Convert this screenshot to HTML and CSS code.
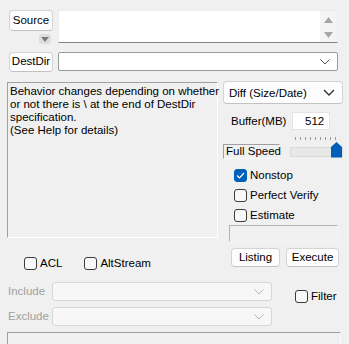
FILE: index.html
```html
<!DOCTYPE html>
<html lang="en">
<head>
    <meta charset="UTF-8">
    <title>Copy Options</title>
    <link rel="stylesheet" href="styles.css">
</head>
<body>
    <div class="win">
        <div class="src-row">
            <div class="src-side">
                <button class="btn btn-side">Source</button>
                <span class="drop-btn">
                    <svg width="8" height="5" viewBox="0 0 8 5"><path d="M0 0h8L4 5z" fill="#7a7a7a"/></svg>
                </span>
            </div>
            <div class="memo">
                <div class="memo-scroll">
                    <svg width="9" height="6" viewBox="0 0 9 6"><path d="M4.5 0L9 6H0z" fill="#a6a6a6"/></svg>
                    <svg width="9" height="6" viewBox="0 0 9 6"><path d="M0 0h9L4.5 6z" fill="#a6a6a6"/></svg>
                </div>
            </div>
        </div>

        <div class="dst-row">
            <button class="btn btn-side">DestDir</button>
            <div class="combo combo-dst">
                <span></span>
                <svg width="10" height="6" viewBox="0 0 10 6"><path d="M0.5 0.5L5 5L9.5 0.5" fill="none" stroke="#555" stroke-width="1"/></svg>
            </div>
        </div>

        <div class="main">
            <div class="note">Behavior changes depending on whether<br>or not there is \ at the end of DestDir<br>specification.<br>(See Help for details)</div>
            <div class="side">
                <div class="combo combo-mode">
                    <span>Diff (Size/Date)</span>
                    <svg width="12" height="7" viewBox="0 0 12 7"><path d="M1 1l5 5 5-5" fill="none" stroke="#333" stroke-width="1.4"/></svg>
                </div>
                <div class="buf">
                    <span class="buf-lbl">Buffer(MB)</span>
                    <span class="num">512</span>
                </div>
                <div class="speed">
                    <span class="speed-lbl">Full Speed</span>
                    <div class="slider">
                        <div class="ticks"></div>
                        <div class="track"></div>
                        <svg class="thumb" width="11" height="16" viewBox="0 0 11 16"><path d="M5.5 0L11 5v10.5H0V5z" fill="#005fb8"/></svg>
                    </div>
                </div>
                <div class="checks">
                    <label class="chk"><span class="box on"><svg width="9" height="7" viewBox="0 0 9 7"><path d="M1 3.5l2.5 2.5L8 1" fill="none" stroke="#fff" stroke-width="1.2"/></svg></span>Nonstop</label>
                    <label class="chk"><span class="box"></span>Perfect Verify</label>
                    <label class="chk"><span class="box"></span>Estimate</label>
                </div>
                <div class="blank"></div>
            </div>
        </div>

        <div class="act-row">
            <div class="opts">
                <label class="chk"><span class="box"></span>ACL</label>
                <label class="chk"><span class="box"></span>AltStream</label>
            </div>
            <div class="acts">
                <button class="btn btn-list">Listing</button>
                <button class="btn btn-exec">Execute</button>
            </div>
        </div>

        <div class="filters">
            <span class="flt-lbl">Include</span>
            <div class="combo combo-off"><span></span><svg width="10" height="6" viewBox="0 0 10 6"><path d="M0.5 0.5L5 5L9.5 0.5" fill="none" stroke="#b4b4b4" stroke-width="1"/></svg></div>
            <label class="chk chk-filter"><span class="box"></span>Filter</label>
            <span class="flt-lbl">Exclude</span>
            <div class="combo combo-off"><span></span><svg width="10" height="6" viewBox="0 0 10 6"><path d="M0.5 0.5L5 5L9.5 0.5" fill="none" stroke="#b4b4b4" stroke-width="1"/></svg></div>
        </div>

        <div class="log"></div>
    </div>
</body>
</html>
```

FILE: styles.css
```css
* {
    box-sizing: border-box;
}
body {
    margin: 0;
    width: 349px;
    height: 344px;
    overflow: hidden;
    background-color: #f0f0f0;
    font-family: "Liberation Sans", Arial, sans-serif;
    font-size: 11.5px;
    color: #000;
    white-space: nowrap;
}
.win {
    padding-top: 10px;
}
.btn {
    font: inherit;
    color: #000;
    background-color: #fdfdfd;
    border: 1px solid #d4d4d4;
    border-bottom-color: #c2c2c2;
    border-radius: 4px;
    padding: 0;
    line-height: 1;
}

/* source / dest */
.src-row {
    display: flex;
    gap: 5px;
    margin: 0 11px 0 9px;
}
.src-side {
    width: 44px;
    display: flex;
    flex-direction: column;
    align-items: flex-end;
}
.btn-side {
    width: 44px;
    height: 21px;
}
.drop-btn {
    width: 12px;
    height: 10px;
    margin: 3px 2px 0 0;
    border-radius: 3px;
    background-color: #dedede;
    display: flex;
    align-items: center;
    justify-content: center;
}
.memo {
    flex: 1;
    height: 33px;
    background-color: #fff;
    border: 1px solid #ececec;
    border-bottom-color: #868686;
    display: flex;
    justify-content: flex-end;
}
.memo-scroll {
    width: 17px;
    background-color: #f4f4f4;
    display: flex;
    flex-direction: column;
    align-items: center;
    justify-content: space-between;
    padding: 6px 0 4px;
}
.dst-row {
    display: flex;
    gap: 5px;
    margin: 8px 11px 0 9px;
}
.dst-row .btn-side {
    height: 20px;
}
.combo {
    display: flex;
    align-items: center;
    justify-content: space-between;
}
.combo-dst {
    flex: 1;
    height: 19px;
    background-color: #fff;
    border: 1px solid #9a9a9a;
    border-radius: 2px;
    padding: 0 7px 0 4px;
}

/* main area */
.main {
    display: flex;
    gap: 4px;
    margin-top: 9px;
    padding-left: 7px;
}
.note {
    width: 211px;
    height: 156px;
    margin-top: 1px;
    padding: 2px 2px;
    border: 1px solid #fff;
    border-top-color: #a0a0a0;
    border-left-color: #a0a0a0;
    line-height: 13px;
}
.side {
    width: 121px;
}
.combo-mode {
    width: 120px;
    height: 23px;
    margin-left: 1px;
    background-color: #fdfdfd;
    border: 1px solid #d4d4d4;
    border-bottom-color: #c2c2c2;
    border-radius: 4px;
    padding: 0 7px 0 5px;
}
.buf {
    display: flex;
    align-items: center;
    height: 18px;
    margin: 8px 0 0 9px;
}
.buf-lbl {
    width: 61px;
}
.num {
    width: 38px;
    height: 18px;
    background-color: #fff;
    border: 1px solid #e4e4e4;
    padding: 2px 0 0 12px;
}
.speed {
    display: flex;
    justify-content: space-between;
    margin-top: 7px;
    height: 21px;
}
.speed-lbl {
    width: 57px;
    height: 15px;
    margin: 7px 0 0 1px;
    padding-left: 2px;
    line-height: 13px;
    border: 1px solid #fafafa;
    border-top-color: #a0a0a0;
    border-left-color: #a0a0a0;
}
.slider {
    position: relative;
    width: 53px;
}
.ticks {
    margin: 0 6px 0 5px;
    height: 3px;
    background-image: repeating-linear-gradient(to right, #9a9a9a 0 1px, transparent 1px 5px);
}
.track {
    margin-top: 7px;
    height: 10px;
    background-color: #e8e8e8;
    border: 1px solid #dadada;
}
.thumb {
    position: absolute;
    right: 1px;
    top: 5px;
}
.checks {
    margin: 7px 0 0 12px;
}
.chk {
    display: flex;
    align-items: center;
    gap: 3px;
    height: 20px;
}
.box {
    width: 13px;
    height: 13px;
    border: 1px solid #3c3c3c;
    border-radius: 3px;
    background-color: #f8f8f8;
    display: flex;
    align-items: center;
    justify-content: center;
}
.box.on {
    background-color: #005fb8;
    border-color: #005fb8;
}
.blank {
    width: 109px;
    height: 17px;
    margin-left: 7px;
    border: 1px solid #f6f6f6;
    border-top-color: #b4b4b4;
    border-left-color: #b4b4b4;
}

/* actions */
.act-row {
    display: flex;
    justify-content: space-between;
    margin: 6px 10px 0 0;
}
.opts {
    display: flex;
    gap: 22px;
    padding: 5px 0 0 24px;
}
.acts {
    display: flex;
    gap: 6px;
}
.btn-list {
    width: 49px;
    height: 19px;
}
.btn-exec {
    width: 53px;
    height: 19px;
}

/* filters */
.filters {
    display: grid;
    grid-template-columns: 44px 220px auto;
    grid-template-rows: 19px 19px;
    row-gap: 6px;
    margin: 9px 0 0 8px;
}
.flt-lbl {
    color: #a0a0a0;
    line-height: 19px;
}
.combo-off {
    background-color: #f7f7f7;
    border: 1px solid #d7d7d7;
    border-radius: 3px;
    padding: 0 7px 0 4px;
}
.chk-filter {
    grid-row: span 2;
    align-self: start;
    margin: 4px 0 0 23px;
}
.log {
    height: 18px;
    margin: 6px 8px 0 7px;
    border: 1px solid #fafafa;
    border-top-color: #a0a0a0;
    border-left-color: #a0a0a0;
}
```
